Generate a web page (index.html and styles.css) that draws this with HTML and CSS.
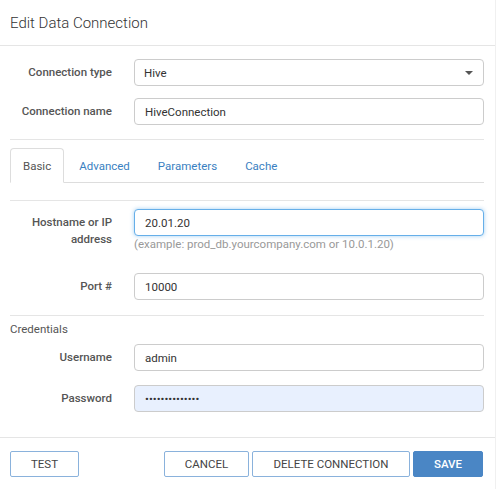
FILE: index.html
```
<!DOCTYPE html>
<html>
<head>
<meta charset="utf-8">
<link rel="stylesheet" href="styles.css">
</head>
<body>
<div class="dialog">
  <div class="header"><h1 class="title">Edit Data Connection</h1></div>
  <div class="body">
    <div class="row mt-13">
      <label class="label">Connection type</label>
      <div class="select">
        <span>Hive</span>
        <span class="caret"></span>
      </div>
    </div>
    <div class="row mt-12">
      <label class="label">Connection name</label>
      <input class="input" type="text" value="HiveConnection">
    </div>
    <div class="sep mt-14"></div>
    <ul class="tabs mt-8">
      <li class="tab active">Basic</li>
      <li class="tab">Advanced</li>
      <li class="tab">Parameters</li>
      <li class="tab">Cache</li>
    </ul>
    <div class="sep mt-17"></div>
    <div class="row mt-8">
      <label class="label">Hostname or IP address</label>
      <div class="field">
        <input class="input focus" type="text" value="20.01.20">
        <div class="help">(example: prod_db.yourcompany.com or 10.0.1.20)</div>
      </div>
    </div>
    <div class="row mt-12">
      <label class="label">Port #</label>
      <input class="input" type="text" value="10000">
    </div>
    <div class="sep mt-15"></div>
    <div class="section mt-5">Credentials</div>
    <div class="row mt-6">
      <label class="label">Username</label>
      <input class="input" type="text" value="admin">
    </div>
    <div class="row mt-14">
      <label class="label">Password</label>
      <input class="input autofill" type="password" value="abcdefghijklmn">
    </div>
  </div>
  <div class="footer">
    <button class="btn w-test">TEST</button>
    <div class="right">
      <button class="btn w-cancel">CANCEL</button>
      <button class="btn w-delete">DELETE CONNECTION</button>
      <button class="btn primary w-save">SAVE</button>
    </div>
  </div>
</div>
</body>
</html>
```
FILE: styles.css
```
* { box-sizing: border-box; }
html, body { margin: 0; padding: 0; background: #fff; }
body {
  font-family: Roboto, "Liberation Sans", Arial, sans-serif;
  font-size: 11.5px;
  color: #333;
}
.dialog {
  width: 496px;
  height: 489px;
  border-right: 1px solid #f0f0f0;
  display: flex;
  flex-direction: column;
}
.header {
  height: 46px;
  border-bottom: 1px solid #e5e5e5;
  display: flex;
  align-items: center;
  padding: 0 10px 0;
}
.title {
  margin: 0;
  font-size: 15px;
  font-weight: 300;
  color: #333;
}
.body {
  padding: 0 11px 25px 10px;
  display: flex;
  flex-direction: column;
}
.mt-5 { margin-top: 5px; }
.mt-6 { margin-top: 6px; }
.mt-8 { margin-top: 8px; }
.mt-12 { margin-top: 12px; }
.mt-13 { margin-top: 13px; }
.mt-14 { margin-top: 14px; }
.mt-15 { margin-top: 15px; }
.mt-17 { margin-top: 17px; }
.row {
  display: grid;
  grid-template-columns: 102px 1fr;
  column-gap: 22px;
  align-items: start;
}
.label {
  text-align: right;
  font-weight: 500;
  color: #555;
  line-height: 17px;
  padding-top: 5px;
}
.input, .select {
  height: 27px;
  width: 100%;
  border: 1px solid #ccc;
  border-radius: 4px;
  padding: 0 10px;
  font: inherit;
  color: #333;
  background: #fff;
  outline: none;
}
.select {
  display: flex;
  align-items: center;
  justify-content: space-between;
  padding: 0 10px 0 9px;
}
.caret {
  width: 0;
  height: 0;
  border-left: 4px solid transparent;
  border-right: 4px solid transparent;
  border-top: 4px solid #555;
}
.input.focus {
  border-color: #66afe9;
  box-shadow: 0 0 4px rgba(102, 175, 233, 0.6);
}
.input.autofill { background: #e8f0fe; }
.help {
  color: #999;
  line-height: 17px;
  margin-bottom: 8px;
}
.sep {
  height: 1px;
  background: #e5e5e5;
}
.tabs {
  list-style: none;
  margin-bottom: 0;
  padding: 0;
  display: flex;
  border-bottom: 1px solid #ddd;
  height: 35px;
}
.tab {
  height: 35px;
  padding: 0 12px;
  margin-right: 2px;
  border: 1px solid transparent;
  border-radius: 4px 4px 0 0;
  display: flex;
  align-items: center;
  color: #3a7fc1;
}
.tab.active {
  color: #555;
  border-color: #ddd;
  border-bottom-color: #fff;
  background: #fff;
}
.section {
  color: #555;
  line-height: 17px;
}
.footer {
  border-top: 1px solid #e5e5e5;
  padding: 13px 12px 0 10px;
  display: flex;
  justify-content: space-between;
  align-items: flex-start;
}
.right { display: flex; gap: 3px; }
.btn {
  height: 26px;
  border: 1px solid #8ab2dc;
  border-radius: 2px;
  background: #fff;
  color: #444;
  font: inherit;
  padding: 0;
  text-align: center;
}
.btn.primary {
  background: #4a86c5;
  border-color: #4a86c5;
  color: #fff;
  font-weight: 500;
}
.w-test { width: 69px; }
.w-cancel { width: 85px; }
.w-delete { width: 158px; }
.w-save { width: 70px; }
```
